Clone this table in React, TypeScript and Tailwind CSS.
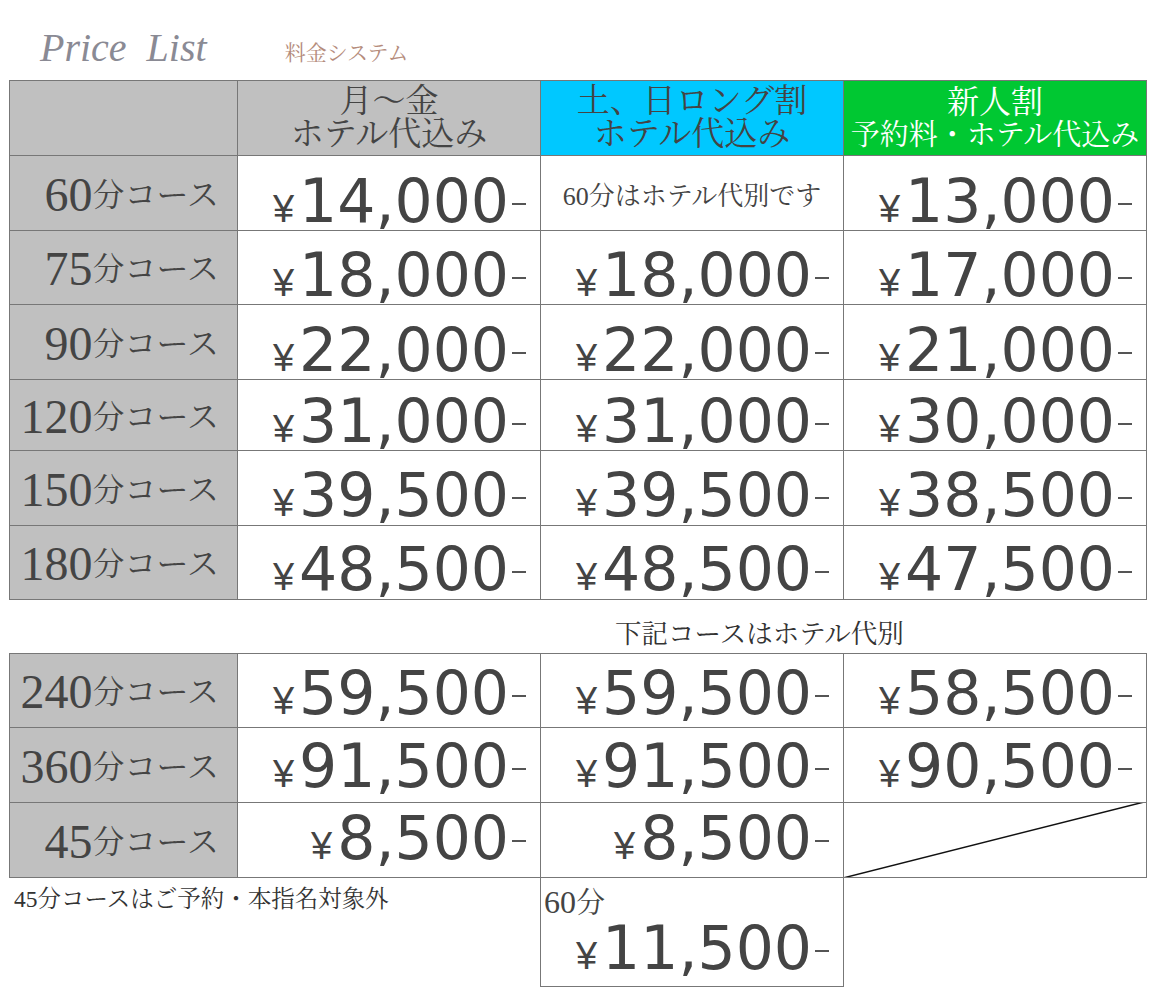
import React from "react";

const serif = "font-['Liberation_Serif','Noto_Serif_CJK_JP','Noto_Sans_CJK_JP',serif]";
const sans = "font-['DejaVu_Sans','Noto_Sans_CJK_JP',sans-serif]";

type Row = { mins: string; h: string; lift: string; prices: (string | null)[] };

// lift = margin under the price so its baseline sits where the picture has it
const topRows: Row[] = [
  { mins: "60", h: "h-[75px]", lift: "-mb-[1px]", prices: ["14,000", null, "13,000"] },
  { mins: "75", h: "h-[74px]", lift: "-mb-[1px]", prices: ["18,000", "18,000", "17,000"] },
  { mins: "90", h: "h-[75px]", lift: "-mb-[1px]", prices: ["22,000", "22,000", "21,000"] },
  { mins: "120", h: "h-[71px]", lift: "-mb-[1px]", prices: ["31,000", "31,000", "30,000"] },
  { mins: "150", h: "h-[75px]", lift: "mb-0", prices: ["39,500", "39,500", "38,500"] },
  { mins: "180", h: "h-[74px]", lift: "mb-0", prices: ["48,500", "48,500", "47,500"] },
];

const bottomRows: Row[] = [
  { mins: "240", h: "h-[74px]", lift: "mb-[4px]", prices: ["59,500", "59,500", "58,500"] },
  { mins: "360", h: "h-[75px]", lift: "mb-[6px]", prices: ["91,500", "91,500", "90,500"] },
  { mins: "45", h: "h-[75px]", lift: "mb-[9px]", prices: ["8,500", "8,500", null] },
];

function Price({ value }: { value: string }) {
  return (
    <span className={`${sans} leading-none text-[60px] text-[#444] whitespace-nowrap`}>
      <span className="font-['Liberation_Sans',sans-serif] text-[38px] mr-[5px]">¥</span>
      {value}
      <span className="inline-block w-[14px] h-[2px] bg-[#555] mb-[17px] ml-[3px]" />
    </span>
  );
}

function Label({ mins, h }: { mins: string; h: string }) {
  return (
    <div className={`${h} bg-[#c0c0c0] border-r border-b border-[#777] flex items-center justify-end pr-[18px] pt-[3px] text-[#444] ${serif} whitespace-nowrap`}>
      <span className="text-[48px] leading-none">{mins}</span>
      <span className="text-[32px] leading-none">分コース</span>
    </div>
  );
}

function PriceCell({ value, h, lift, children }: { value: string | null; h: string; lift: string; children?: React.ReactNode }) {
  return (
    <div className={`${h} border-r border-b border-[#777] flex items-end justify-end pr-[14px] relative`}>
      {value && (
        <div className={lift}>
          <Price value={value} />
        </div>
      )}
      {children}
    </div>
  );
}

export default function App() {
  return (
    <div className="w-[1160px] h-[1000px] bg-white overflow-hidden">
      {/* title */}
      <div className="h-[80px] flex items-start pt-[28px]">
        <span className="ml-[40px] italic font-['Liberation_Serif',serif] text-[40px] leading-none text-[#8a8a94]">
          Price&nbsp;&nbsp;List
        </span>
        <span className={`ml-[78px] mt-[15px] ${serif} text-[21px] leading-none text-[#b58c7c]`}>料金システム</span>
      </div>

      {/* top table */}
      <div className="ml-[9px] w-[1138px] grid grid-cols-[228px_303px_303px_303px] border-l border-t border-[#777]">
        <div className="h-[75px] bg-[#c0c0c0] border-r border-b border-[#777]" />
        <div className={`h-[75px] bg-[#c0c0c0] border-r border-b border-[#777] flex flex-col items-center justify-center ${serif} text-[33px] leading-[33px] text-[#444]`}>
          <span>月～金</span>
          <span>ホテル代込み</span>
        </div>
        <div className={`h-[75px] bg-[#00c8ff] border-r border-b border-[#777] flex flex-col items-center justify-center ${serif} text-[33px] leading-[33px] text-[#444]`}>
          <span>土、日ロング割</span>
          <span>ホテル代込み</span>
        </div>
        <div className={`h-[75px] bg-[#00c832] border-r border-b border-[#777] flex flex-col items-center justify-center ${serif} text-white`}>
          <span className="text-[32px] leading-[33px]">新人割</span>
          <span className="text-[29px] leading-[32px] whitespace-nowrap">予約料・ホテル代込み</span>
        </div>

        {topRows.map((r) => (
          <React.Fragment key={r.mins}>
            <Label mins={r.mins} h={r.h} />
            {r.prices.map((p, i) =>
              p === null ? (
                <div key={i} className={`${r.h} border-r border-b border-[#777] flex items-center justify-center pt-[6px] ${serif} text-[26px] text-[#444]`}>
                  60分はホテル代別です
                </div>
              ) : (
                <PriceCell key={i} value={p} h={r.h} lift={r.lift} />
              )
            )}
          </React.Fragment>
        ))}
      </div>

      {/* note */}
      <div className="h-[53px] flex items-center pl-[615px] pt-[16px]">
        <span className={`${serif} text-[26.5px] leading-none text-[#333]`}>下記コースはホテル代別</span>
      </div>

      {/* bottom table */}
      <div className="ml-[9px] w-[1138px] grid grid-cols-[228px_303px_303px_303px] border-l border-t border-[#777]">
        {bottomRows.map((r) => (
          <React.Fragment key={r.mins}>
            <Label mins={r.mins} h={r.h} />
            {r.prices.map((p, i) =>
              p === null ? (
                <PriceCell key={i} value={null} h={r.h} lift={r.lift}>
                  <svg className="absolute inset-0 w-full h-full" viewBox="0 0 100 100" preserveAspectRatio="none">
                    <line x1="0" y1="101" x2="100" y2="-2" stroke="#111" strokeWidth="1.5" vectorEffect="non-scaling-stroke" />
                  </svg>
                </PriceCell>
              ) : (
                <PriceCell key={i} value={p} h={r.h} lift={r.lift} />
              )
            )}
          </React.Fragment>
        ))}
      </div>

      {/* footer */}
      <div className="flex">
        <div className={`w-[540px] pl-[14px] pt-[10px] ${serif} text-[23.5px] leading-none text-[#333] whitespace-nowrap`}>
          45分コースはご予約・本指名対象外
        </div>
        <div className="w-[304px] h-[109px] border-x border-b border-[#777] flex flex-col">
          <div className={`pl-[3px] pt-[8px] ${serif} text-[#444] leading-none`}>
            <span className="text-[32px]">60</span>
            <span className="text-[29px]">分</span>
          </div>
          <div className="flex-1 flex items-end justify-end pr-[14px]">
            <div className="mb-[15px]">
              <Price value="11,500" />
            </div>
          </div>
        </div>
      </div>
    </div>
  );
}
